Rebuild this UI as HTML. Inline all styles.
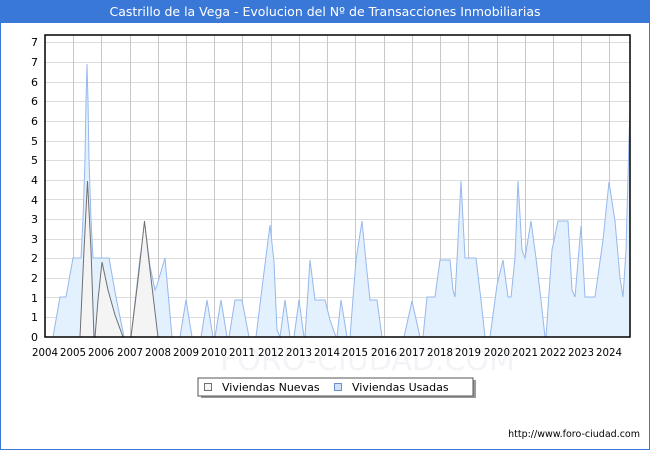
<!DOCTYPE html>
<html><head><meta charset="utf-8"><style>
html,body{margin:0;padding:0;background:#fff}
body{width:650px;height:450px;overflow:hidden;font-family:"DejaVu Sans","Liberation Sans",sans-serif}
</style></head><body>
<svg width="650" height="450" xmlns="http://www.w3.org/2000/svg" font-family="DejaVu Sans, Liberation Sans, sans-serif">
<rect x="0.5" y="0.5" width="649" height="449" fill="#fff" stroke="#3a78d8"/>
<rect x="0" y="0" width="650" height="23" fill="#3a78d8"/>
<text x="325" y="16" fill="#fff" font-size="12.5" text-anchor="middle">Castrillo de la Vega - Evolucion del Nº de Transacciones Inmobiliarias</text>
<g stroke="#dcdcdc" stroke-width="1">
<line x1="45" x2="630" y1="317.5" y2="317.5"/><line x1="45" x2="630" y1="297.5" y2="297.5"/><line x1="45" x2="630" y1="278.5" y2="278.5"/><line x1="45" x2="630" y1="258.5" y2="258.5"/><line x1="45" x2="630" y1="239.5" y2="239.5"/><line x1="45" x2="630" y1="219.5" y2="219.5"/><line x1="45" x2="630" y1="199.5" y2="199.5"/><line x1="45" x2="630" y1="180.5" y2="180.5"/><line x1="45" x2="630" y1="160.5" y2="160.5"/><line x1="45" x2="630" y1="141.5" y2="141.5"/><line x1="45" x2="630" y1="121.5" y2="121.5"/><line x1="45" x2="630" y1="101.5" y2="101.5"/><line x1="45" x2="630" y1="82.5" y2="82.5"/><line x1="45" x2="630" y1="62.5" y2="62.5"/><line x1="45" x2="630" y1="42.5" y2="42.5"/>
</g>
<g stroke="#c8c8c8" stroke-width="1">
<line x1="73.5" x2="73.5" y1="35" y2="337"/><line x1="101.5" x2="101.5" y1="35" y2="337"/><line x1="130.5" x2="130.5" y1="35" y2="337"/><line x1="158.5" x2="158.5" y1="35" y2="337"/><line x1="186.5" x2="186.5" y1="35" y2="337"/><line x1="214.5" x2="214.5" y1="35" y2="337"/><line x1="242.5" x2="242.5" y1="35" y2="337"/><line x1="271.5" x2="271.5" y1="35" y2="337"/><line x1="299.5" x2="299.5" y1="35" y2="337"/><line x1="327.5" x2="327.5" y1="35" y2="337"/><line x1="355.5" x2="355.5" y1="35" y2="337"/><line x1="384.5" x2="384.5" y1="35" y2="337"/><line x1="412.5" x2="412.5" y1="35" y2="337"/><line x1="440.5" x2="440.5" y1="35" y2="337"/><line x1="468.5" x2="468.5" y1="35" y2="337"/><line x1="497.5" x2="497.5" y1="35" y2="337"/><line x1="525.5" x2="525.5" y1="35" y2="337"/><line x1="553.5" x2="553.5" y1="35" y2="337"/><line x1="581.5" x2="581.5" y1="35" y2="337"/><line x1="609.5" x2="609.5" y1="35" y2="337"/>
</g>
<text x="220" y="370" font-size="30" fill="#f3f4f8">FORO-CIUDAD.COM</text>
<polygon fill="#e3f0fd" stroke="#96b8ec" stroke-width="1" points="53,337 60,297 66,297 73,258 81,258 83,219 85,160 86,101 87,64 88,101 89,160 91,219 93,258 109,258 116,297 124,337 131,337 140,258 145,226 150,266 155,290 157,285 165,258 172,337 180,337 186,300 192,337 201,337 207,300 213,337 215,337 221,300 227,337 229,337 235,300 242,300 249,337 256,337 263,280 270,225 274,262 277,330 280,337 285,300 290,337 294,337 299,300 304,337 305,337 310,260 315,300 325,300 330,320 336,337 337,337 341,300 347,337 350,337 356,260 362,221 366,262 370,300 377,300 382,337 404,337 412,301 420,337 423,337 427,297 435,297 440,260 450,260 453,290 455,297 457,260 461,181 465,258 476,258 481,300 485,337 490,337 497,285 503,260 508,297 511,297 515,258 518,181 522,250 525,258 531,221 536,258 541,300 545,337 546,337 552,250 558,221 568,221 572,290 575,297 581,226 585,297 595,297 603,240 609,182 615,221 620,278 623,297 626,250 629,140 630,110 630,337"/>
<polygon fill="#f4f4f4" stroke="#707070" stroke-width="1" points="80,337 84,250 87.5,181 91,250 94,337 95,337 98,300 102,262 108,290 115,315 123,337 131,337 138,280 144.5,221 150,270 158,337"/>
<rect x="45" y="35" width="585" height="302" fill="none" stroke="#000" stroke-width="1.5"/>
<g font-size="11" fill="#000" text-anchor="end">
<text x="38" y="341">0</text><text x="38" y="321">1</text><text x="38" y="302">1</text><text x="38" y="282">2</text><text x="38" y="262">2</text><text x="38" y="243">3</text><text x="38" y="223">3</text><text x="38" y="204">4</text><text x="38" y="184">4</text><text x="38" y="164">5</text><text x="38" y="145">5</text><text x="38" y="125">6</text><text x="38" y="105">6</text><text x="38" y="86">6</text><text x="38" y="66">7</text><text x="38" y="46">7</text>
</g>
<g font-size="10.5" fill="#000" text-anchor="middle" lengthAdjust="spacingAndGlyphs">
<text x="45" y="356" textLength="26" lengthAdjust="spacingAndGlyphs">2004</text><text x="73" y="356" textLength="26" lengthAdjust="spacingAndGlyphs">2005</text><text x="101" y="356" textLength="26" lengthAdjust="spacingAndGlyphs">2006</text><text x="130" y="356" textLength="26" lengthAdjust="spacingAndGlyphs">2007</text><text x="158" y="356" textLength="26" lengthAdjust="spacingAndGlyphs">2008</text><text x="186" y="356" textLength="26" lengthAdjust="spacingAndGlyphs">2009</text><text x="214" y="356" textLength="26" lengthAdjust="spacingAndGlyphs">2010</text><text x="242" y="356" textLength="26" lengthAdjust="spacingAndGlyphs">2011</text><text x="271" y="356" textLength="26" lengthAdjust="spacingAndGlyphs">2012</text><text x="299" y="356" textLength="26" lengthAdjust="spacingAndGlyphs">2013</text><text x="327" y="356" textLength="26" lengthAdjust="spacingAndGlyphs">2014</text><text x="355" y="356" textLength="26" lengthAdjust="spacingAndGlyphs">2015</text><text x="384" y="356" textLength="26" lengthAdjust="spacingAndGlyphs">2016</text><text x="412" y="356" textLength="26" lengthAdjust="spacingAndGlyphs">2017</text><text x="440" y="356" textLength="26" lengthAdjust="spacingAndGlyphs">2018</text><text x="468" y="356" textLength="26" lengthAdjust="spacingAndGlyphs">2019</text><text x="497" y="356" textLength="26" lengthAdjust="spacingAndGlyphs">2020</text><text x="525" y="356" textLength="26" lengthAdjust="spacingAndGlyphs">2021</text><text x="553" y="356" textLength="26" lengthAdjust="spacingAndGlyphs">2022</text><text x="581" y="356" textLength="26" lengthAdjust="spacingAndGlyphs">2023</text><text x="609" y="356" textLength="26" lengthAdjust="spacingAndGlyphs">2024</text>
</g>
<rect x="201" y="380" width="275" height="18" fill="#999"/>
<rect x="198" y="378" width="275" height="18" fill="#fff" stroke="#555"/>
<rect x="204.5" y="383.5" width="7" height="7" fill="#f4f4f4" stroke="#707070"/>
<text x="222" y="391" font-size="11">Viviendas Nuevas</text>
<rect x="334.5" y="383.5" width="7" height="7" fill="#cfe3f8" stroke="#6a8fc8"/>
<text x="352" y="391" font-size="11">Viviendas Usadas</text>
<text x="640" y="437" font-size="9.5" text-anchor="end">http://www.foro-ciudad.com</text>
</svg>
</body></html>
